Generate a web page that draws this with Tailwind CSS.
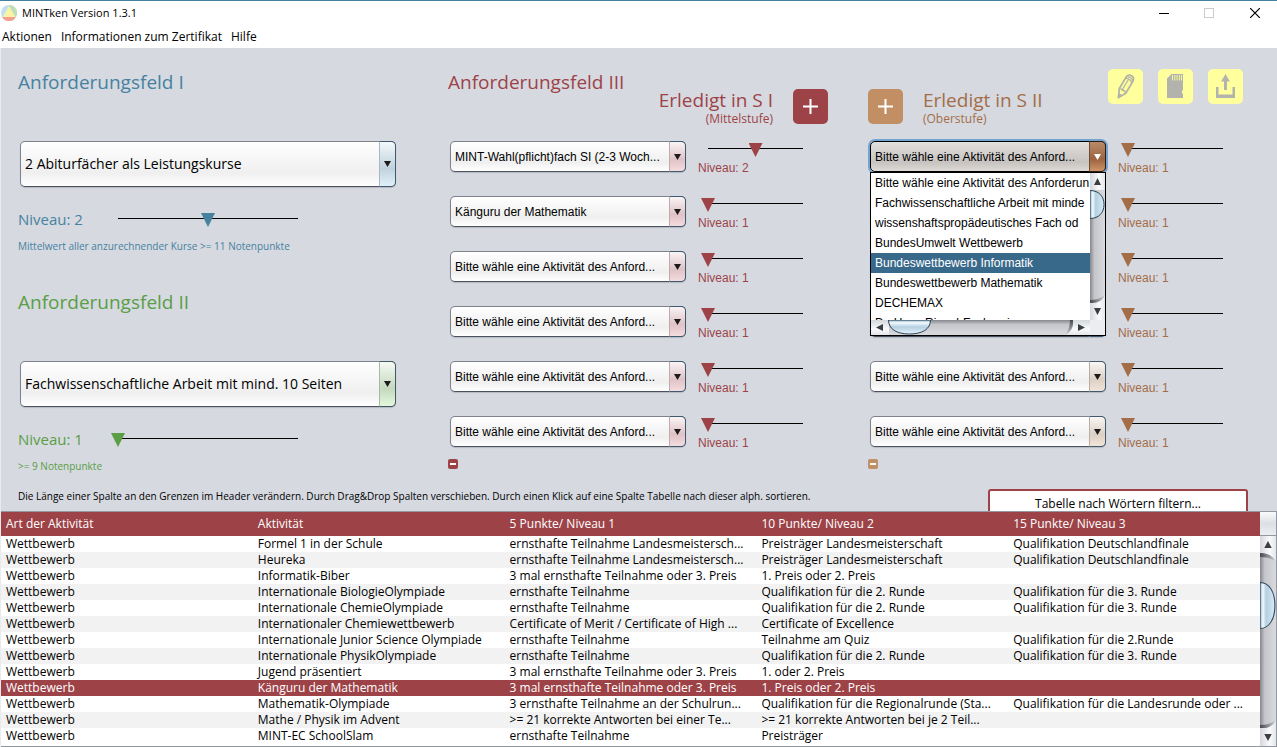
<!DOCTYPE html>
<html lang="de">
<head>
<meta charset="utf-8">
<meta name="viewport" content="width=device-width, initial-scale=1">
<title>MINTken Version 1.3.1</title>
<script src="https://cdn.jsdelivr.net/npm/@tailwindcss/browser@4"></script>
</head>
<body class="flex h-screen flex-col overflow-hidden bg-white font-['Open_Sans',sans-serif] text-xs text-black">

<header class="border-t border-[#4382a0]">
  <div class="flex h-6 items-center">
    <svg class="ml-px h-4 w-4" viewBox="0 0 16 16" aria-hidden="true">
      <circle cx="8" cy="8" r="8" fill="#bfe0f2"/>
      <path d="M8 0a8 8 0 0 1 7 12L8 8z" fill="#bfdfb4"/>
      <path d="M1 12h14a8 8 0 0 1-14 0z" fill="#f0a08c"/>
      <path d="M8 1l6.400 11H1.600z" fill="#f8f3a8"/>
    </svg>
    <h1 class="ml-[5px] text-[11px]">MINTken Version 1.3.1</h1>
    <div class="ml-auto flex items-center pr-[17px]">
      <button type="button" aria-label="Minimieren" class="mr-[35px]"><svg class="h-[10px] w-[10px]" viewBox="0 0 10 10" shape-rendering="crispEdges"><path d="M0 5.500h10" stroke="#000"/></svg></button>
      <button type="button" aria-label="Maximieren" disabled class="mr-9"><svg class="h-[10px] w-[10px]" viewBox="0 0 10 10" shape-rendering="crispEdges"><path d="M.5.5h9v9h-9z" fill="none" stroke="#ccc"/></svg></button>
      <button type="button" aria-label="Schließen"><svg class="h-[10px] w-[10px]" viewBox="0 0 10 10"><path d="M0 0l10 10M10 0L0 10" stroke="#000" stroke-width="1.200"/></svg></button>
    </div>
  </div>
  <nav class="flex h-[23px] items-center gap-[9px] pl-0.5">
    <button type="button">Aktionen</button>
    <button type="button">Informationen zum Zertifikat</button>
    <button type="button">Hilfe</button>
  </nav>
</header>

<main class="flex min-h-0 flex-1 flex-col border-l border-[#e8eaed] bg-[#d6d9e0]">
  <div class="grid h-[434px] shrink-0 grid-cols-[430fr_420fr_409fr] pl-[17px]">

    <div>
      <section class="flex h-[220px] flex-col pt-[22px] text-[#4682a0]">
        <h2 class="text-[19px] leading-6">Anforderungsfeld I</h2>
        <div class="mt-[47px] mr-[52px] ml-0.5 grid">
          <select aria-label="Aktivität Anforderungsfeld I" class="col-start-1 row-start-1 h-[46px] appearance-none rounded-[5px] border border-[#7d828c] border-b-[#4d5260] bg-linear-to-b from-white via-[#efefef] via-70% to-white pr-5 pl-1 text-sm text-black shadow-[0_1px_1px_#b4b8c0]"><option>2 Abiturfächer als Leistungskurse</option></select>
          <span class="pointer-events-none col-start-1 row-start-1 flex w-[17px] items-center justify-center justify-self-end rounded-r-[5px] border border-[#3f5a70] border-l-[#a8b8c0] bg-linear-to-b from-[#f4f9fb] via-[#bfd2dc] via-60% to-[#e0f0f8]"><svg class="h-1.5 w-[7px]" viewBox="0 0 7 6"><path d="M0 0h7L3.500 6z" fill="#1a1a1a"/></svg></span>
        </div>
        <div class="mt-5 flex h-6 items-center">
          <label for="n-1" class="w-[93px] text-[15px]">Niveau: 2</label>
          <input id="n-1" type="range" min="1" max="3" value="2" class="mt-0.5 h-3.5 w-[194px] appearance-none bg-[linear-gradient(#000,#000)] bg-size-[calc(100%-14px)_1px] bg-position-[center_5px] bg-no-repeat [&::-webkit-slider-thumb]:h-3.5 [&::-webkit-slider-thumb]:w-3.5 [&::-webkit-slider-thumb]:appearance-none [&::-webkit-slider-thumb]:bg-[#4682a0] [&::-webkit-slider-thumb]:[clip-path:polygon(0_0,100%_0,50%_100%)]">
        </div>
        <p class="mt-[7px] text-[10px] leading-4">Mittelwert aller anzurechnender Kurse &gt;= 11 Notenpunkte</p>
      </section>
      <section class="flex h-[214px] flex-col pt-[22px] text-[#5a9e46]">
        <h2 class="text-[19px] leading-6">Anforderungsfeld II</h2>
        <div class="mt-[47px] mr-[52px] ml-0.5 grid">
          <select aria-label="Aktivität Anforderungsfeld II" class="col-start-1 row-start-1 h-[46px] appearance-none rounded-[5px] border border-[#7d828c] border-b-[#4d5260] bg-linear-to-b from-white via-[#efefef] via-70% to-white pr-5 pl-1 text-sm text-black shadow-[0_1px_1px_#b4b8c0]"><option>Fachwissenschaftliche Arbeit mit mind. 10 Seiten</option></select>
          <span class="pointer-events-none col-start-1 row-start-1 flex w-[17px] items-center justify-center justify-self-end rounded-r-[5px] border border-[#3f5a60] border-l-[#a8b8a8] bg-linear-to-b from-[#f6faf4] via-[#c4d8be] via-60% to-[#e4f8dc]"><svg class="h-1.5 w-[7px]" viewBox="0 0 7 6"><path d="M0 0h7L3.500 6z" fill="#1a1a1a"/></svg></span>
        </div>
        <div class="mt-5 flex h-6 items-center">
          <label for="n-2" class="w-[93px] text-[15px]">Niveau: 1</label>
          <input id="n-2" type="range" min="1" max="3" value="1" class="mt-0.5 h-3.5 w-[194px] appearance-none bg-[linear-gradient(#000,#000)] bg-size-[calc(100%-14px)_1px] bg-position-[center_5px] bg-no-repeat [&::-webkit-slider-thumb]:h-3.5 [&::-webkit-slider-thumb]:w-3.5 [&::-webkit-slider-thumb]:appearance-none [&::-webkit-slider-thumb]:bg-[#5a9e46] [&::-webkit-slider-thumb]:[clip-path:polygon(0_0,100%_0,50%_100%)]">
        </div>
        <p class="mt-[7px] text-[10px] leading-4">&gt;= 9 Notenpunkte</p>
      </section>
    </div>

    <section class="text-[#9d4348]">
      <div class="mr-10 flex h-[93px] items-start">
        <h2 class="pt-[22px] text-[19px] leading-6">Anforderungsfeld III</h2>
        <div class="mt-10 ml-auto text-right">
          <h3 class="text-[19px] leading-6">Erledigt in S I</h3>
          <p class="text-xs leading-[13px]">(Mittelstufe)</p>
        </div>
        <button type="button" aria-label="Aktivität in S I hinzufügen" class="mt-[41px] ml-5 flex size-[35px] items-center justify-center rounded-[5px] bg-[#9d4348]"><svg class="h-[15px] w-[15px]" viewBox="0 0 15 15"><path d="M0 6.500h15v2H0zM6.500 0h2v15h-2z" fill="#fff"/></svg></button>
      </div>
      <div id="sek1" class="flex flex-col font-['Liberation_Sans',sans-serif]"></div>
      <button type="button" aria-label="Letzte Aktivität in S I entfernen" class="-mt-3 flex size-2.5 items-center justify-center rounded-xs bg-[#9d4348]"><span class="h-0.5 w-1.5 bg-white"></span></button>
    </section>

    <section class="text-[#a36d47]">
      <div class="mr-[34px] flex h-[93px] items-start">
        <button type="button" aria-label="Aktivität in S II hinzufügen" class="mt-[41px] mr-5 flex size-[35px] items-center justify-center rounded-[5px] bg-[#c28e64]"><svg class="h-[15px] w-[15px]" viewBox="0 0 15 15"><path d="M0 6.500h15v2H0zM6.500 0h2v15h-2z" fill="#fff"/></svg></button>
        <div class="mt-10">
          <h3 class="text-[19px] leading-6">Erledigt in S II</h3>
          <p class="text-xs leading-[13px]">(Oberstufe)</p>
        </div>
        <div class="mt-[21px] ml-auto flex gap-[15px]">
          <button type="button" aria-label="Bearbeiten" class="size-[35px] rounded-[5px] bg-[#ffff9e]">
            <svg viewBox="0 0 35 35" fill="none" stroke="#b3b3a6" stroke-width="1.700" stroke-linejoin="round"><path d="M10.500 28.500L11.300 19.500L18.500 7.500Q20.500 5 24 7Q26.500 9 25 12L17.800 24.300z"/><path d="M11.300 20Q12.500 19 14 21Q17 21.200 17.800 24M14 21L20.500 10.500M18 9.300Q22.500 9.500 23.800 14M19.300 7.600Q23.500 8 24.800 12" stroke-width="1.300"/><path d="M10.500 28.500l.4-3.500 2.600 1.600z" fill="#b3b3a6"/></svg>
          </button>
          <button type="button" aria-label="Speichern" class="size-[35px] rounded-[5px] bg-[#ffff9e]">
            <svg viewBox="0 0 35 35"><path d="M13.500 5H25v16l-1 1v2l1 1v4H9V9.500z" fill="#b3b3ae"/><path d="M14.500 6v5.500M16.800 6v5.500M19.100 6v5.500M21.400 6v5.500M23.500 6v5.500" stroke="#ffff9e" stroke-width=".9"/></svg>
          </button>
          <button type="button" aria-label="Exportieren" class="size-[35px] rounded-[5px] bg-[#ffff9e]">
            <svg viewBox="0 0 35 35"><path d="M17.500 5Q19.500 8.500 22 12.500H19V21h-3v-8.500h-3Q15.500 8.500 17.500 5z" fill="#b3b3ae"/><path d="M8 18h2.500v7.500h14V18H27v11H8z" fill="#b3b3ae"/></svg>
          </button>
        </div>
      </div>
      <div class="relative">
        <div id="sek2" class="flex flex-col font-['Liberation_Sans',sans-serif]"></div>
        <div class="absolute top-[31px] left-0.5 grid h-[164px] w-[236px] grid-cols-[1fr_15px] grid-rows-[1fr_15px] border border-black bg-white font-['Liberation_Sans',sans-serif] text-black">
          <ul role="listbox" aria-label="Aktivitäten" class="overflow-hidden leading-5 whitespace-nowrap">
            <li role="option" class="h-5 pl-1">Bitte wähle eine Aktivität des Anforderun</li>
            <li role="option" class="h-5 pl-1">Fachwissenschaftliche Arbeit mit minde</li>
            <li role="option" class="h-5 pl-1">wissenshaftspropädeutisches Fach od</li>
            <li role="option" class="h-5 pl-1">BundesUmwelt Wettbewerb</li>
            <li role="option" aria-selected="true" class="h-5 bg-[#39698a] pl-1 text-white">Bundeswettbewerb Informatik</li>
            <li role="option" class="h-5 pl-1">Bundeswettbewerb Mathematik</li>
            <li role="option" class="h-5 pl-1">DECHEMAX</li>
            <li role="option" class="h-5 pl-1">Dr. Hans Riegel-Fachpreise</li>
          </ul>
          <svg class="h-full w-full" viewBox="0 0 15 147" preserveAspectRatio="none" aria-hidden="true">
            <defs>
              <linearGradient id="track"><stop offset="0" stop-color="#85878c"/><stop offset=".3" stop-color="#c4c6cb"/><stop offset="1" stop-color="#d8dade"/></linearGradient>
              <linearGradient id="cap"><stop offset="0" stop-color="#d4d7dc"/><stop offset=".6" stop-color="#fafafb"/><stop offset="1" stop-color="#e4e6ea"/></linearGradient>
              <linearGradient id="knob"><stop offset="0" stop-color="#8fb1c8"/><stop offset=".2" stop-color="#f4faff"/><stop offset=".4" stop-color="#b4cfe0"/><stop offset="1" stop-color="#d8ebf6"/></linearGradient>
              <linearGradient id="lip"><stop offset="0" stop-color="#44474c"/><stop offset="1" stop-color="#d0d2d6"/></linearGradient>
            </defs>
            <path d="M0 0h15v147H0z" fill="url(#track)"/>
            <path d="M0 0h15v17H0zM0 130q11 1 15-8v25H0z" fill="url(#cap)"/>
            <path d="M0 130q11 1 15-8q-6 5-15 5z" fill="url(#lip)"/>
            <path d="M0 17.500c9 0 14 6 14 14s-5 14-14 14z" fill="url(#knob)" stroke="#2c4456"/>
            <path d="M4 12l3.500-7L11 12zM4 135h7l-3.500 7z" fill="#3a3d42"/>
          </svg>
          <svg class="h-full w-full" viewBox="0 0 219 15" preserveAspectRatio="none" aria-hidden="true">
            <defs>
              <linearGradient id="htrack" x2="0" y2="1"><stop offset="0" stop-color="#85878c"/><stop offset=".3" stop-color="#c4c6cb"/><stop offset="1" stop-color="#d8dade"/></linearGradient>
              <linearGradient id="hcap" x2="0" y2="1"><stop offset="0" stop-color="#d4d7dc"/><stop offset=".6" stop-color="#fafafb"/><stop offset="1" stop-color="#e4e6ea"/></linearGradient>
              <linearGradient id="hknob" x2="0" y2="1"><stop offset="0" stop-color="#8fb1c8"/><stop offset=".2" stop-color="#f4faff"/><stop offset=".5" stop-color="#b4cfe0"/><stop offset="1" stop-color="#e4f4fc"/></linearGradient>
              <linearGradient id="hlip" x2="0" y2="1"><stop offset="0" stop-color="#44474c"/><stop offset="1" stop-color="#d0d2d6"/></linearGradient>
            </defs>
            <path d="M0 0h219v15H0z" fill="url(#htrack)"/>
            <path d="M0 0h18v15H0zM202 0q1 11-8 15h25V0z" fill="url(#hcap)"/>
            <path d="M202 0q1 11-8 15q5-6 5-15z" fill="url(#hlip)"/>
            <path d="M17.500 0c0 9 8 14 21 14s21-5 21-14z" fill="url(#hknob)" stroke="#2c4456"/>
            <path d="M12 4v7L5 7.500zM207 4v7l7-3.500z" fill="#3a3d42"/>
          </svg>
          <span class="bg-[#ecedf1]"></span>
        </div>
      </div>
      <button type="button" aria-label="Letzte Aktivität in S II entfernen" class="-mt-3 flex size-2.5 items-center justify-center rounded-xs bg-[#c28e64]"><span class="h-0.5 w-1.5 bg-white"></span></button>
    </section>
  </div>

  <div class="flex h-[29px] shrink-0 items-start justify-between overflow-hidden pr-[29px] pl-[17px]">
    <p class="pt-1.5 text-[10px] leading-4">Die Länge einer Spalte an den Grenzen im Header verändern. Durch Drag&amp;Drop Spalten verschieben. Durch einen Klick auf eine Spalte Tabelle nach dieser alph. sortieren.</p>
    <input type="text" aria-label="Tabelle filtern" placeholder="Tabelle nach Wörtern filtern..." class="mt-[7px] h-7 w-[260px] rounded-[3px] border-2 border-[#9d4348] bg-white text-center text-xs placeholder:text-black">
  </div>

  <div class="flex min-h-0 flex-1 border-y border-r border-[#9297a1] bg-white">
    <div class="min-w-0 flex-1 overflow-hidden">
      <table class="w-full table-fixed border-collapse text-left whitespace-nowrap">
        <thead>
          <tr class="h-6 bg-[#9d4348] text-white">
            <th class="truncate px-[5px] py-0 font-normal">Art der Aktivität</th>
            <th class="truncate px-[5px] py-0 font-normal">Aktivität</th>
            <th class="truncate px-[5px] py-0 font-normal">5 Punkte/ Niveau 1</th>
            <th class="truncate px-[5px] py-0 font-normal">10 Punkte/ Niveau 2</th>
            <th class="truncate px-[5px] py-0 font-normal">15 Punkte/ Niveau 3</th>
          </tr>
        </thead>
        <tbody id="rows" class="leading-4"></tbody>
      </table>
    </div>
    <div class="flex w-4 flex-col">
      <div class="h-6 border-b border-[#9297a1] bg-linear-to-b from-[#fafbfb] via-[#dcdfe4] to-[#eceef2]"></div>
      <svg class="min-h-0 w-full flex-1" viewBox="0 0 15 210" preserveAspectRatio="none" aria-hidden="true">
        <path d="M0 0h15v210H0z" fill="url(#track)"/>
        <path d="M0 0h15v26q-4-9-15-9zM0 192q11 1 15-8v26H0z" fill="url(#cap)"/>
        <path d="M15 26q-4-9-15-9v4q10 0 15 5zM0 192q11 1 15-8q-6 5-15 5z" fill="url(#lip)"/>
        <path d="M0 46.500c9 0 14 10 14 23s-5 23-14 23z" fill="url(#knob)" stroke="#2c4456"/>
        <path d="M4 12l3.500-7L11 12zM4 198h7l-3.500 7z" fill="#3a3d42"/>
      </svg>
    </div>
  </div>
</main>

<script>
const placeholder = 'Bitte wähle eine Aktivität des Anford...';

const themes = {
  red: {
    arrow: 'border-[#3f5a70] border-l-[#c0aab0] from-[#faf4f5] via-[#dfc2c5] via-60% to-[#f4dcde]',
    thumb: '[&::-webkit-slider-thumb]:bg-[#9d4348]',
  },
  brown: {
    arrow: 'border-[#3f5a70] border-l-[#b8aca4] from-[#faf7f4] via-[#dccfc4] via-60% to-[#f2e4d8]',
    thumb: '[&::-webkit-slider-thumb]:bg-[#a36d47]',
  },
};

// One activity: drop-down on the left, level slider with its label on the right.
function activityRow(group, index, theme, text, level, open) {
  const id = `${group}-${index}`;
  const box = open
    ? 'border-black bg-linear-to-b from-[#e2e0de] via-[#c6c3c0] via-70% to-[#dedad6] shadow-[0_0_0_2px_#73a4d1]'
    : 'border-[#7d828c] border-b-[#4d5260] bg-linear-to-b from-white via-[#efefef] via-70% to-white shadow-[0_1px_1px_#b4b8c0]';
  const arrow = open ? 'border-[#2a1c12] border-l-[#6f4a30] from-[#b98a68] via-[#9c6440] via-60% to-[#cf9468]' : theme.arrow;
  return `<div class="flex h-[55px] items-start pl-0.5">
    <div class="grid w-[236px]">
      <select aria-label="Aktivität ${index + 1}" class="col-start-1 row-start-1 h-[31px] appearance-none rounded-[5px] border pr-5 pl-1 text-xs text-black ${box}"><option>${text}</option></select>
      <span class="pointer-events-none col-start-1 row-start-1 flex w-[17px] items-center justify-center justify-self-end rounded-r-[5px] border bg-linear-to-b ${arrow}"><svg class="h-1.5 w-[7px]" viewBox="0 0 7 6"><path d="M0 0h7L3.500 6z" fill="${open ? '#fff' : '#1a1a1a'}"/></svg></span>
    </div>
    <div class="ml-3 flex flex-col pt-0.5">
      <input id="${id}" type="range" min="1" max="3" value="${level}" class="ml-[3px] h-3.5 w-[109px] appearance-none bg-[linear-gradient(#000,#000)] bg-size-[calc(100%-14px)_1px] bg-position-[center_5px] bg-no-repeat [&::-webkit-slider-thumb]:h-3.5 [&::-webkit-slider-thumb]:w-3.5 [&::-webkit-slider-thumb]:appearance-none [&::-webkit-slider-thumb]:[clip-path:polygon(0_0,100%_0,50%_100%)] ${theme.thumb}">
      <label for="${id}" class="mt-[3px] text-xs">Niveau: ${level}</label>
    </div>
  </div>`;
}

const sek1 = [['MINT-Wahl(pflicht)fach SI (2-3 Woch...', 2], ['Känguru der Mathematik', 1], [placeholder, 1], [placeholder, 1], [placeholder, 1], [placeholder, 1]];
document.getElementById('sek1').innerHTML = sek1.map(([t, n], i) => activityRow('s1', i, themes.red, t, n, false)).join('');
document.getElementById('sek2').innerHTML = Array.from({ length: 6 }, (_, i) => activityRow('s2', i, themes.brown, placeholder, 1, i === 0)).join('');

const rows = [
  ['Formel 1 in der Schule', 'ernsthafte Teilnahme Landesmeistersch...', 'Preisträger Landesmeisterschaft', 'Qualifikation Deutschlandfinale'],
  ['Heureka', 'ernsthafte Teilnahme Landesmeistersch...', 'Preisträger Landesmeisterschaft', 'Qualifikation Deutschlandfinale'],
  ['Informatik-Biber', '3 mal ernsthafte Teilnahme oder 3. Preis', '1. Preis oder 2. Preis', ''],
  ['Internationale BiologieOlympiade', 'ernsthafte Teilnahme', 'Qualifikation für die 2. Runde', 'Qualifikation für die 3. Runde'],
  ['Internationale ChemieOlympiade', 'ernsthafte Teilnahme', 'Qualifikation für die 2. Runde', 'Qualifikation für die 3. Runde'],
  ['Internationaler Chemiewettbewerb', 'Certificate of Merit / Certificate of High ...', 'Certificate of Excellence', ''],
  ['Internationale Junior Science Olympiade', 'ernsthafte Teilnahme', 'Teilnahme am Quiz', 'Qualifikation für die 2.Runde'],
  ['Internationale PhysikOlympiade', 'ernsthafte Teilnahme', 'Qualifikation für die 2. Runde', 'Qualifikation für die 3. Runde'],
  ['Jugend präsentiert', '3 mal ernsthafte Teilnahme oder 3. Preis', '1. oder 2. Preis', ''],
  ['Känguru der Mathematik', '3 mal ernsthafte Teilnahme oder 3. Preis', '1. Preis oder 2. Preis', ''],
  ['Mathematik-Olympiade', '3 ernsthafte Teilnahme an der Schulrun...', 'Qualifikation für die Regionalrunde (Sta...', 'Qualifikation für die Landesrunde oder ...'],
  ['Mathe / Physik im Advent', '>= 21 korrekte Antworten bei einer Te...', '>= 21 korrekte Antworten bei je 2 Teil...', ''],
  ['MINT-EC SchoolSlam', 'ernsthafte Teilnahme', 'Preisträger', ''],
];
const selected = 9;
document.getElementById('rows').innerHTML = rows.map((r, i) => {
  const tone = i === selected ? 'bg-[#9d4348] text-white' : i % 2 ? 'bg-[#f2f2f2]' : 'bg-white';
  return `<tr class="h-4 ${tone}">${['Wettbewerb', ...r].map(c => `<td class="overflow-hidden px-[5px] py-0">${c.replace('>', '&gt;')}</td>`).join('')}</tr>`;
}).join('');
</script>
</body>
</html>
